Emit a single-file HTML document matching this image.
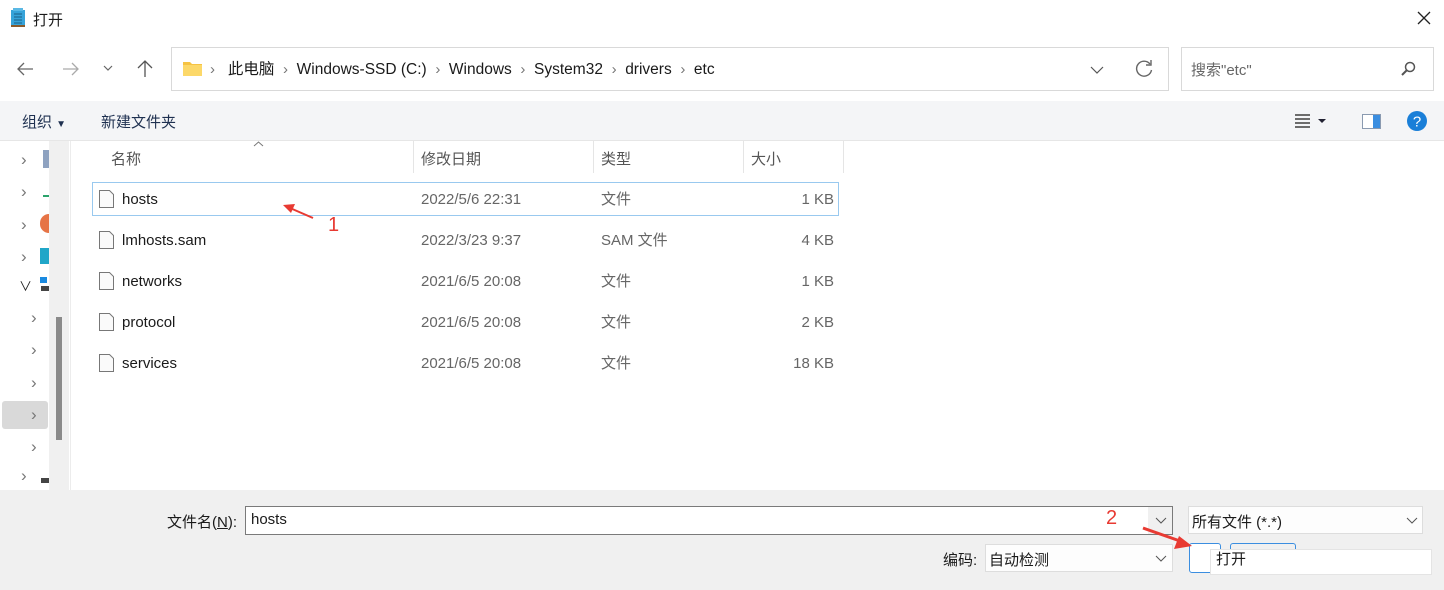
<!DOCTYPE html>
<html><head><meta charset="utf-8"><style>
*{margin:0;padding:0;box-sizing:border-box}
body{width:1444px;height:590px;background:#fff;font-family:"Liberation Sans","Noto Sans CJK SC",sans-serif;font-size:15px;color:#1a1a1a;position:relative;overflow:hidden}
.a{position:absolute;white-space:nowrap}
.g{color:#666}
.chev{color:#777;font-size:15px}
</style></head><body>
<!-- title -->
<svg class="a" style="left:10px;top:8px" width="16" height="20"><rect x="1" y="2" width="14" height="17" fill="#36a3d9"/><rect x="1" y="17" width="14" height="2" fill="#8a5a2b"/><g stroke="#1b5f86" stroke-width="1"><line x1="4" y1="6" x2="12" y2="6"/><line x1="4" y1="9" x2="12" y2="9"/><line x1="4" y1="12" x2="12" y2="12"/><line x1="4" y1="15" x2="12" y2="15"/></g><rect x="3" y="0" width="10" height="3" fill="#5ab8e4"/></svg>
<div class="a" style="left:33px;top:9px">打开</div>
<svg class="a" style="left:1417px;top:11px" width="14" height="14"><path d="M1 1L13 13M13 1L1 13" stroke="#222" stroke-width="1.3"/></svg>
<!-- nav -->
<svg class="a" style="left:16px;top:61px" width="18" height="16"><path d="M17 8H2M8 2L2 8l6 6" fill="none" stroke="#666" stroke-width="1.3"/></svg>
<svg class="a" style="left:62px;top:61px" width="18" height="16"><path d="M1 8h15M10 2l6 6-6 6" fill="none" stroke="#aaa" stroke-width="1.3"/></svg>
<svg class="a" style="left:103px;top:65px" width="10" height="6"><path d="M1 1l4 4 4-4" fill="none" stroke="#666" stroke-width="1.2"/></svg>
<svg class="a" style="left:136px;top:59px" width="18" height="19"><path d="M9 18V2M2 9l7-7 7 7" fill="none" stroke="#555" stroke-width="1.3"/></svg>
<div class="a" style="left:171px;top:47px;width:998px;height:44px;border:1px solid #d9d9d9"></div>
<svg class="a" style="left:183px;top:60px" width="19" height="16"><path d="M0 2h7l2 2h10v12H0z" fill="#f6c343"/><rect x="0" y="5" width="19" height="11" fill="#fcd869"/></svg>
<div class="a" style="top:57px;left:210px;font-size:15.5px"><span class="chev">›</span>&nbsp;&nbsp; 此电脑&nbsp; <span class="chev">›</span>&nbsp; Windows-SSD (C:)&nbsp; <span class="chev">›</span>&nbsp; Windows&nbsp; <span class="chev">›</span>&nbsp; System32&nbsp; <span class="chev">›</span>&nbsp; drivers&nbsp; <span class="chev">›</span>&nbsp; etc</div>
<svg class="a" style="left:1090px;top:66px" width="14" height="8"><path d="M1 1l6 6 6-6" fill="none" stroke="#555" stroke-width="1.2"/></svg>
<svg class="a" style="left:1134px;top:59px" width="20" height="20"><path d="M16 5A7.5 7.5 0 1 0 17.5 11" fill="none" stroke="#666" stroke-width="1.4"/><path d="M17 1v5h-5" fill="none" stroke="#666" stroke-width="1.4"/></svg>
<div class="a" style="left:1181px;top:47px;width:253px;height:44px;border:1px solid #d9d9d9"></div>
<div class="a g" style="left:1191px;top:59px">搜索"etc"</div>
<svg class="a" style="left:1400px;top:61px" width="16" height="16"><circle cx="10" cy="6" r="4.5" fill="none" stroke="#555" stroke-width="1.5"/><path d="M7 9L2 14" stroke="#555" stroke-width="2"/></svg>
<!-- toolbar -->
<div class="a" style="left:0;top:101px;width:1444px;height:40px;background:#f4f5f7;border-bottom:1px solid #e6e6e6"></div>
<div class="a" style="left:22px;top:111px;color:#1e3050">组织 <span style="font-size:10px">▼</span></div>
<div class="a" style="left:101px;top:111px;color:#1e3050">新建文件夹</div>
<svg class="a" style="left:1293px;top:113px" width="36" height="15"><g stroke="#222" stroke-width="1.3"><line x1="2" y1="2" x2="17" y2="2"/><line x1="2" y1="6" x2="17" y2="6"/><line x1="2" y1="10" x2="17" y2="10"/><line x1="2" y1="14" x2="17" y2="14"/></g><path d="M25 6h8l-4 4z" fill="#223"/></svg>
<svg class="a" style="left:1362px;top:114px" width="19" height="15"><rect x="0.5" y="0.5" width="18" height="14" fill="#fff" stroke="#8a9ab0"/><rect x="11" y="1" width="7" height="13" fill="#3b8ee0"/></svg>
<svg class="a" style="left:1406px;top:110px" width="22" height="22"><circle cx="11" cy="11" r="10" fill="#1a7fd8"/><text x="11" y="16.5" font-size="15" font-family="Liberation Sans" text-anchor="middle" fill="#fff">?</text></svg>
<!-- left nav -->
<div class="a" style="left:49px;top:141px;width:20px;height:349px;background:#f0f0f0"></div>
<div class="a" style="left:56px;top:317px;width:6px;height:123px;background:#8a8a8a"></div>
<div class="a" style="left:70px;top:141px;width:1px;height:349px;background:#ececec"></div>
<div class="a" style="left:2px;top:401px;width:46px;height:28px;background:#d9d9d9;border-radius:3px"></div>
<div class="a chev" style="left:21px;top:144px;font-size:17px;line-height:32.3px;color:#777">›<br>›<br>›<br>›</div>
<div class="a" style="left:19px;top:276px;font-size:13px;color:#222">∨</div>
<div class="a chev" style="left:31px;top:302px;font-size:17px;line-height:32.3px;color:#777">›<br>›<br>›<br>›<br>›</div>
<div class="a chev" style="left:21px;top:466px;font-size:17px;color:#777">›</div>
<div class="a" style="left:43px;top:150px;width:6px;height:18px;background:#8ea2c0"></div>
<div class="a" style="left:43px;top:187px;width:6px;height:10px;border-bottom:2px solid #2aa36b"></div>
<div class="a" style="left:40px;top:214px;width:9px;height:19px;background:#e67446;border-radius:9px 0 0 9px"></div>
<div class="a" style="left:40px;top:248px;width:9px;height:16px;background:#20a6c8"></div>
<div class="a" style="left:40px;top:277px;width:7px;height:6px;background:#1a8ae0"></div>
<div class="a" style="left:41px;top:286px;width:8px;height:5px;background:#444"></div>
<div class="a" style="left:41px;top:478px;width:8px;height:5px;background:#444"></div>
<!-- headers -->
<div class="a" style="left:111px;top:148px;color:#555">名称</div>
<svg class="a" style="left:253px;top:141px" width="11" height="6"><path d="M1 5l4.5-4 4.5 4" fill="none" stroke="#777"/></svg>
<div class="a" style="left:413px;top:141px;width:1px;height:32px;background:#e5e5e5"></div>
<div class="a" style="left:593px;top:141px;width:1px;height:32px;background:#e5e5e5"></div>
<div class="a" style="left:743px;top:141px;width:1px;height:32px;background:#e5e5e5"></div>
<div class="a" style="left:843px;top:141px;width:1px;height:32px;background:#e5e5e5"></div>
<div class="a" style="left:421px;top:148px;color:#555">修改日期</div>
<div class="a" style="left:601px;top:148px;color:#555">类型</div>
<div class="a" style="left:751px;top:148px;color:#555">大小</div>
<!-- rows -->
<div class="a" style="left:92px;top:182px;width:747px;height:34px;border:1px solid #99c9ef"></div>
<svg class="a" style="left:98px;top:189px" width="18" height="200"><g fill="#fafafa" stroke="#777" stroke-width="1"><path d="M1.5 1.5h10l4 4v13h-14z"/><path d="M1.5 42.5h10l4 4v13h-14z"/><path d="M1.5 83.5h10l4 4v13h-14z"/><path d="M1.5 124.5h10l4 4v13h-14z"/><path d="M1.5 165.5h10l4 4v13h-14z"/></g></svg>
<div class="a" style="left:122px;top:179px;line-height:41px">hosts<br>lmhosts.sam<br>networks<br>protocol<br>services</div>
<div class="a g" style="left:421px;top:179px;line-height:41px">2022/5/6 22:31<br>2022/3/23 9:37<br>2021/6/5 20:08<br>2021/6/5 20:08<br>2021/6/5 20:08</div>
<div class="a g" style="left:601px;top:179px;line-height:41px">文件<br>SAM 文件<br>文件<br>文件<br>文件</div>
<div class="a g" style="left:750px;top:179px;width:84px;text-align:right;line-height:41px">1 KB<br>4 KB<br>1 KB<br>2 KB<br>18 KB</div>
<!-- arrow 1 -->
<svg class="a" style="left:280px;top:198px" width="40" height="24"><path d="M33 20L10 10" stroke="#e83a32" stroke-width="2"/><path d="M3 7l12-1-4 9z" fill="#e83a32"/></svg>
<div class="a" style="left:328px;top:214px;color:#e83a32;font-size:20px">1</div>
<!-- bottom -->
<div class="a" style="left:0;top:490px;width:1444px;height:100px;background:#f0f0f0"></div>
<div class="a" style="left:167px;top:511px">文件名(<u>N</u>):</div>
<div class="a" style="left:245px;top:506px;width:928px;height:29px;border:1px solid #7a7a7a;background:#fff"></div>
<div class="a" style="left:251px;top:511px">hosts</div>
<div class="a" style="left:1148px;top:507px;width:24px;height:27px;background:#f0f0f0"></div>
<svg class="a" style="left:1155px;top:517px" width="12" height="7"><path d="M1 1l5 5 5-5" fill="none" stroke="#555"/></svg>
<div class="a" style="left:1188px;top:506px;width:235px;height:28px;border:1px solid #ddd;background:#fdfdfd"></div>
<div class="a" style="left:1192px;top:511px">所有文件 (*.*)</div>
<svg class="a" style="left:1406px;top:517px" width="12" height="7"><path d="M1 1l5 5 5-5" fill="none" stroke="#555"/></svg>
<div class="a" style="left:943px;top:549px">编码:</div>
<div class="a" style="left:985px;top:544px;width:188px;height:28px;border:1px solid #ddd;background:#fdfdfd"></div>
<div class="a" style="left:989px;top:549px">自动检测</div>
<svg class="a" style="left:1155px;top:555px" width="12" height="7"><path d="M1 1l5 5 5-5" fill="none" stroke="#555"/></svg>
<div class="a" style="left:1189px;top:543px;width:32px;height:30px;border:1px solid #3b8ee0;border-radius:3px;background:#fff"></div>
<div class="a" style="left:1230px;top:543px;width:66px;height:10px;border:1px solid #3b8ee0;border-bottom:none;border-radius:3px 3px 0 0"></div>
<div class="a" style="left:1210px;top:549px;width:222px;height:26px;background:#fff;border:1px solid #e4e4e4"></div>
<div class="a" style="left:1216px;top:548px">打开</div>
<!-- arrow 2 -->
<svg class="a" style="left:1140px;top:522px" width="60" height="30"><path d="M3 6L40 19" stroke="#e83a32" stroke-width="3"/><path d="M52 24l-18 3 5-13z" fill="#e83a32"/></svg>
<div class="a" style="left:1106px;top:507px;color:#e83a32;font-size:20px">2</div>
</body></html>
